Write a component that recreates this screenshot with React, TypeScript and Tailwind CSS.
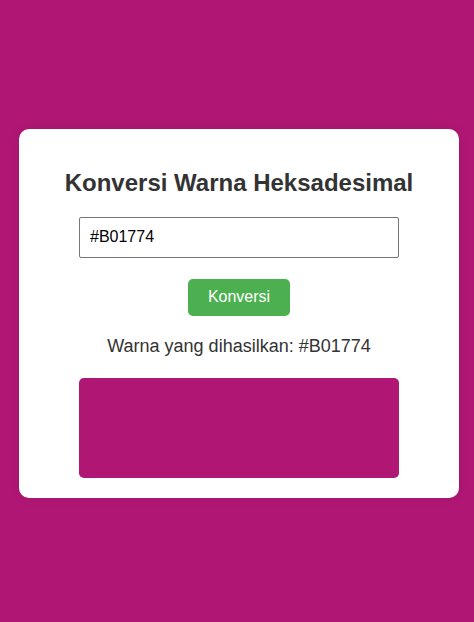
import React, { useState } from 'react';

export default function App() {
  const [hex, setHex] = useState('#B01774');
  const [color, setColor] = useState('#B01774');

  const convert = () => {
    if (/^#([0-9a-fA-F]{3}|[0-9a-fA-F]{6})$/.test(hex)) setColor(hex.toUpperCase());
  };

  return (
    <div
      className="min-h-[622px] flex items-center justify-center pl-[4px] pt-[5px] font-['Liberation_Sans',Arial,sans-serif]"
      style={{ backgroundColor: color }}
    >
      <div className="w-[440px] bg-white rounded-[10px] px-5 pt-5 pb-5 shadow-[0_0_10px_rgba(0,0,0,0.1)] flex flex-col items-center text-center">
        <h2 className="text-[24px] leading-[27.6px] font-bold text-[#333] my-[20px]">
          Konversi Warna Heksadesimal
        </h2>
        <input
          type="text"
          value={hex}
          onChange={e => setHex(e.target.value)}
          className="w-[320px] h-[41px] px-[10px] text-[16px] text-black border border-[#767676] rounded-[2px] outline-none"
        />
        <button
          onClick={convert}
          className="mt-[21px] h-[37px] px-5 bg-[#4CAF50] text-white text-[16px] rounded-[5px]"
        >
          Konversi
        </button>
        <p className="mt-5 text-[18px] leading-[20.7px] text-[#333]">
          Warna yang dihasilkan: {color}
        </p>
        <div className="mt-[21px] w-[320px] h-[100px] rounded-[5px]" style={{ backgroundColor: color }} />
      </div>
    </div>
  );
}
